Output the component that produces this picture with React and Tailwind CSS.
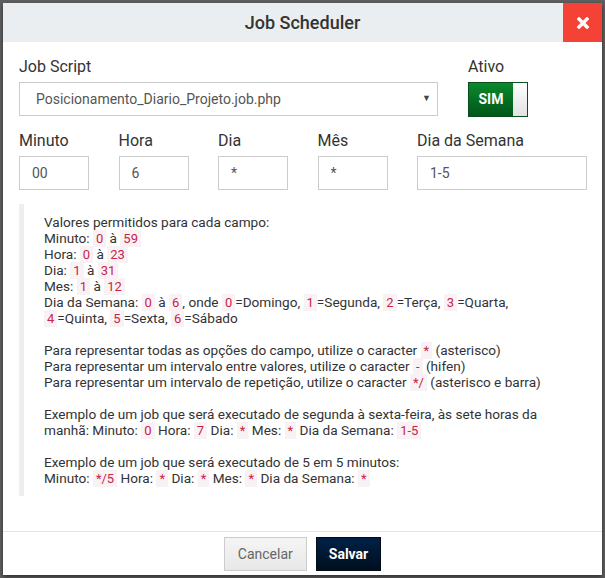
import React from 'react';

const C = ({ children }) => (
  <code className="bg-[#f9f2f4] text-[#c7254e] px-[3px] py-[1px] font-[Roboto,sans-serif] text-[13px] leading-none">{children}</code>
);

const Field = ({ label, value, width }) => (
  <div className={width}>
    <label className="block text-[16px] leading-[20px] text-[#333] mb-[5px]">{label}</label>
    <input
      readOnly
      value={value}
      className="w-full h-[34px] border border-[#ccc] px-[12px] text-[14px] text-[#555] outline-none bg-white"
    />
  </div>
);

const App = () => {
  return (
    <div className="w-[605px] h-[578px] bg-[#5e5e5e] pt-[3px] pl-[3px] font-[Roboto,sans-serif]">
      <div className="w-[599px] h-[572px] bg-white flex flex-col shadow-[0_2px_4px_rgba(0,0,0,0.5)]">
        {/* header */}
        <div className="h-[39px] bg-[#ebeef0] flex items-center relative">
          <h4 className="flex-1 text-center text-[18px] text-[#333] font-medium">Job Scheduler</h4>
          <button className="absolute right-0 top-0 w-[39px] h-[39px] bg-[#f44336] flex items-center justify-center">
            <svg width="12" height="12" viewBox="0 0 12 12">
              <path d="M2 2 L10 10 M10 2 L2 10" stroke="white" strokeWidth="3.4" strokeLinecap="square" />
            </svg>
          </button>
        </div>

        {/* body */}
        <div className="flex-1 pl-[16px] pr-[15px] pt-[15px]">
          <div className="flex gap-[30px]">
            <div className="w-[419px]">
              <label className="block text-[16px] leading-[20px] text-[#333] mb-[5px]">Job Script</label>
              <div className="h-[34px] border border-[#ccc] flex items-center justify-between pl-[16px] pr-[6px]">
                <span className="text-[14px] text-[#555]">Posicionamento_Diario_Projeto.job.php</span>
                <span className="text-[9px] text-[#444]">▼</span>
              </div>
            </div>
            <div>
              <label className="block text-[16px] leading-[20px] text-[#333] mb-[5px]">Ativo</label>
              <div className="w-[60px] h-[35px] border border-[#0b4d1d] bg-gradient-to-b from-[#0b8a2b] to-[#01561a] flex">
                <div className="flex-1 flex items-center justify-center text-white font-bold text-[14px]">SIM</div>
                <div className="w-[14px] bg-gradient-to-b from-[#ffffff] to-[#e2e2e2]" />
              </div>
            </div>
          </div>

          <div className="flex gap-[29.5px] mt-[14px]">
            <Field label="Minuto" value="00" width="w-[70px]" />
            <Field label="Hora" value="6" width="w-[70px]" />
            <Field label="Dia" value="*" width="w-[70px]" />
            <Field label="Mês" value="*" width="w-[70px]" />
            <Field label="Dia da Semana" value="1-5" width="w-[170px]" />
          </div>

          <blockquote className="mt-[14px] w-[567px] border-l-[5px] border-[#eee] pl-[20px] pt-[10px] pb-[10px] text-[13.6px] leading-[16px] text-[#333]">
            <div>Valores permitidos para cada campo:</div>
            <div>Minuto: <C>0</C> à <C>59</C></div>
            <div>Hora: <C>0</C> à <C>23</C></div>
            <div>Dia: <C>1</C> à <C>31</C></div>
            <div>Mes: <C>1</C> à <C>12</C></div>
            <div>Dia da Semana: <C>0</C> à <C>6</C>, onde <C>0</C>=Domingo, <C>1</C>=Segunda, <C>2</C>=Terça, <C>3</C>=Quarta,</div>
            <div><C>4</C>=Quinta, <C>5</C>=Sexta, <C>6</C>=Sábado</div>
            <div className="mt-[16px]">Para representar todas as opções do campo, utilize o caracter <C>*</C> (asterisco)</div>
            <div>Para representar um intervalo entre valores, utilize o caracter <C>-</C> (hifen)</div>
            <div>Para representar um intervalo de repetição, utilize o caracter <C>*/</C> (asterisco e barra)</div>
            <div className="mt-[16px]">Exemplo de um job que será executado de segunda à sexta-feira, às sete horas da</div>
            <div>manhã: Minuto: <C>0</C> Hora: <C>7</C> Dia: <C>*</C> Mes: <C>*</C> Dia da Semana: <C>1-5</C></div>
            <div className="mt-[16px]">Exemplo de um job que será executado de 5 em 5 minutos:</div>
            <div>Minuto: <C>*/5</C> Hora: <C>*</C> Dia: <C>*</C> Mes: <C>*</C> Dia da Semana: <C>*</C></div>
          </blockquote>
        </div>

        {/* footer */}
        <div className="border-t border-[#e5e5e5] h-[44px] flex items-start justify-center gap-[9px] pt-[5px]">
          <button className="h-[34px] px-[13px] border border-[#ccc] bg-gradient-to-b from-[#f5f5f5] to-[#e8e8e8] text-[14px] text-[#666]">Cancelar</button>
          <button className="h-[34px] px-[12px] border border-[#000c18] bg-gradient-to-b from-[#002147] to-[#000f1f] text-[14px] text-white font-bold">Salvar</button>
        </div>
      </div>
    </div>
  );
};

export default App;
